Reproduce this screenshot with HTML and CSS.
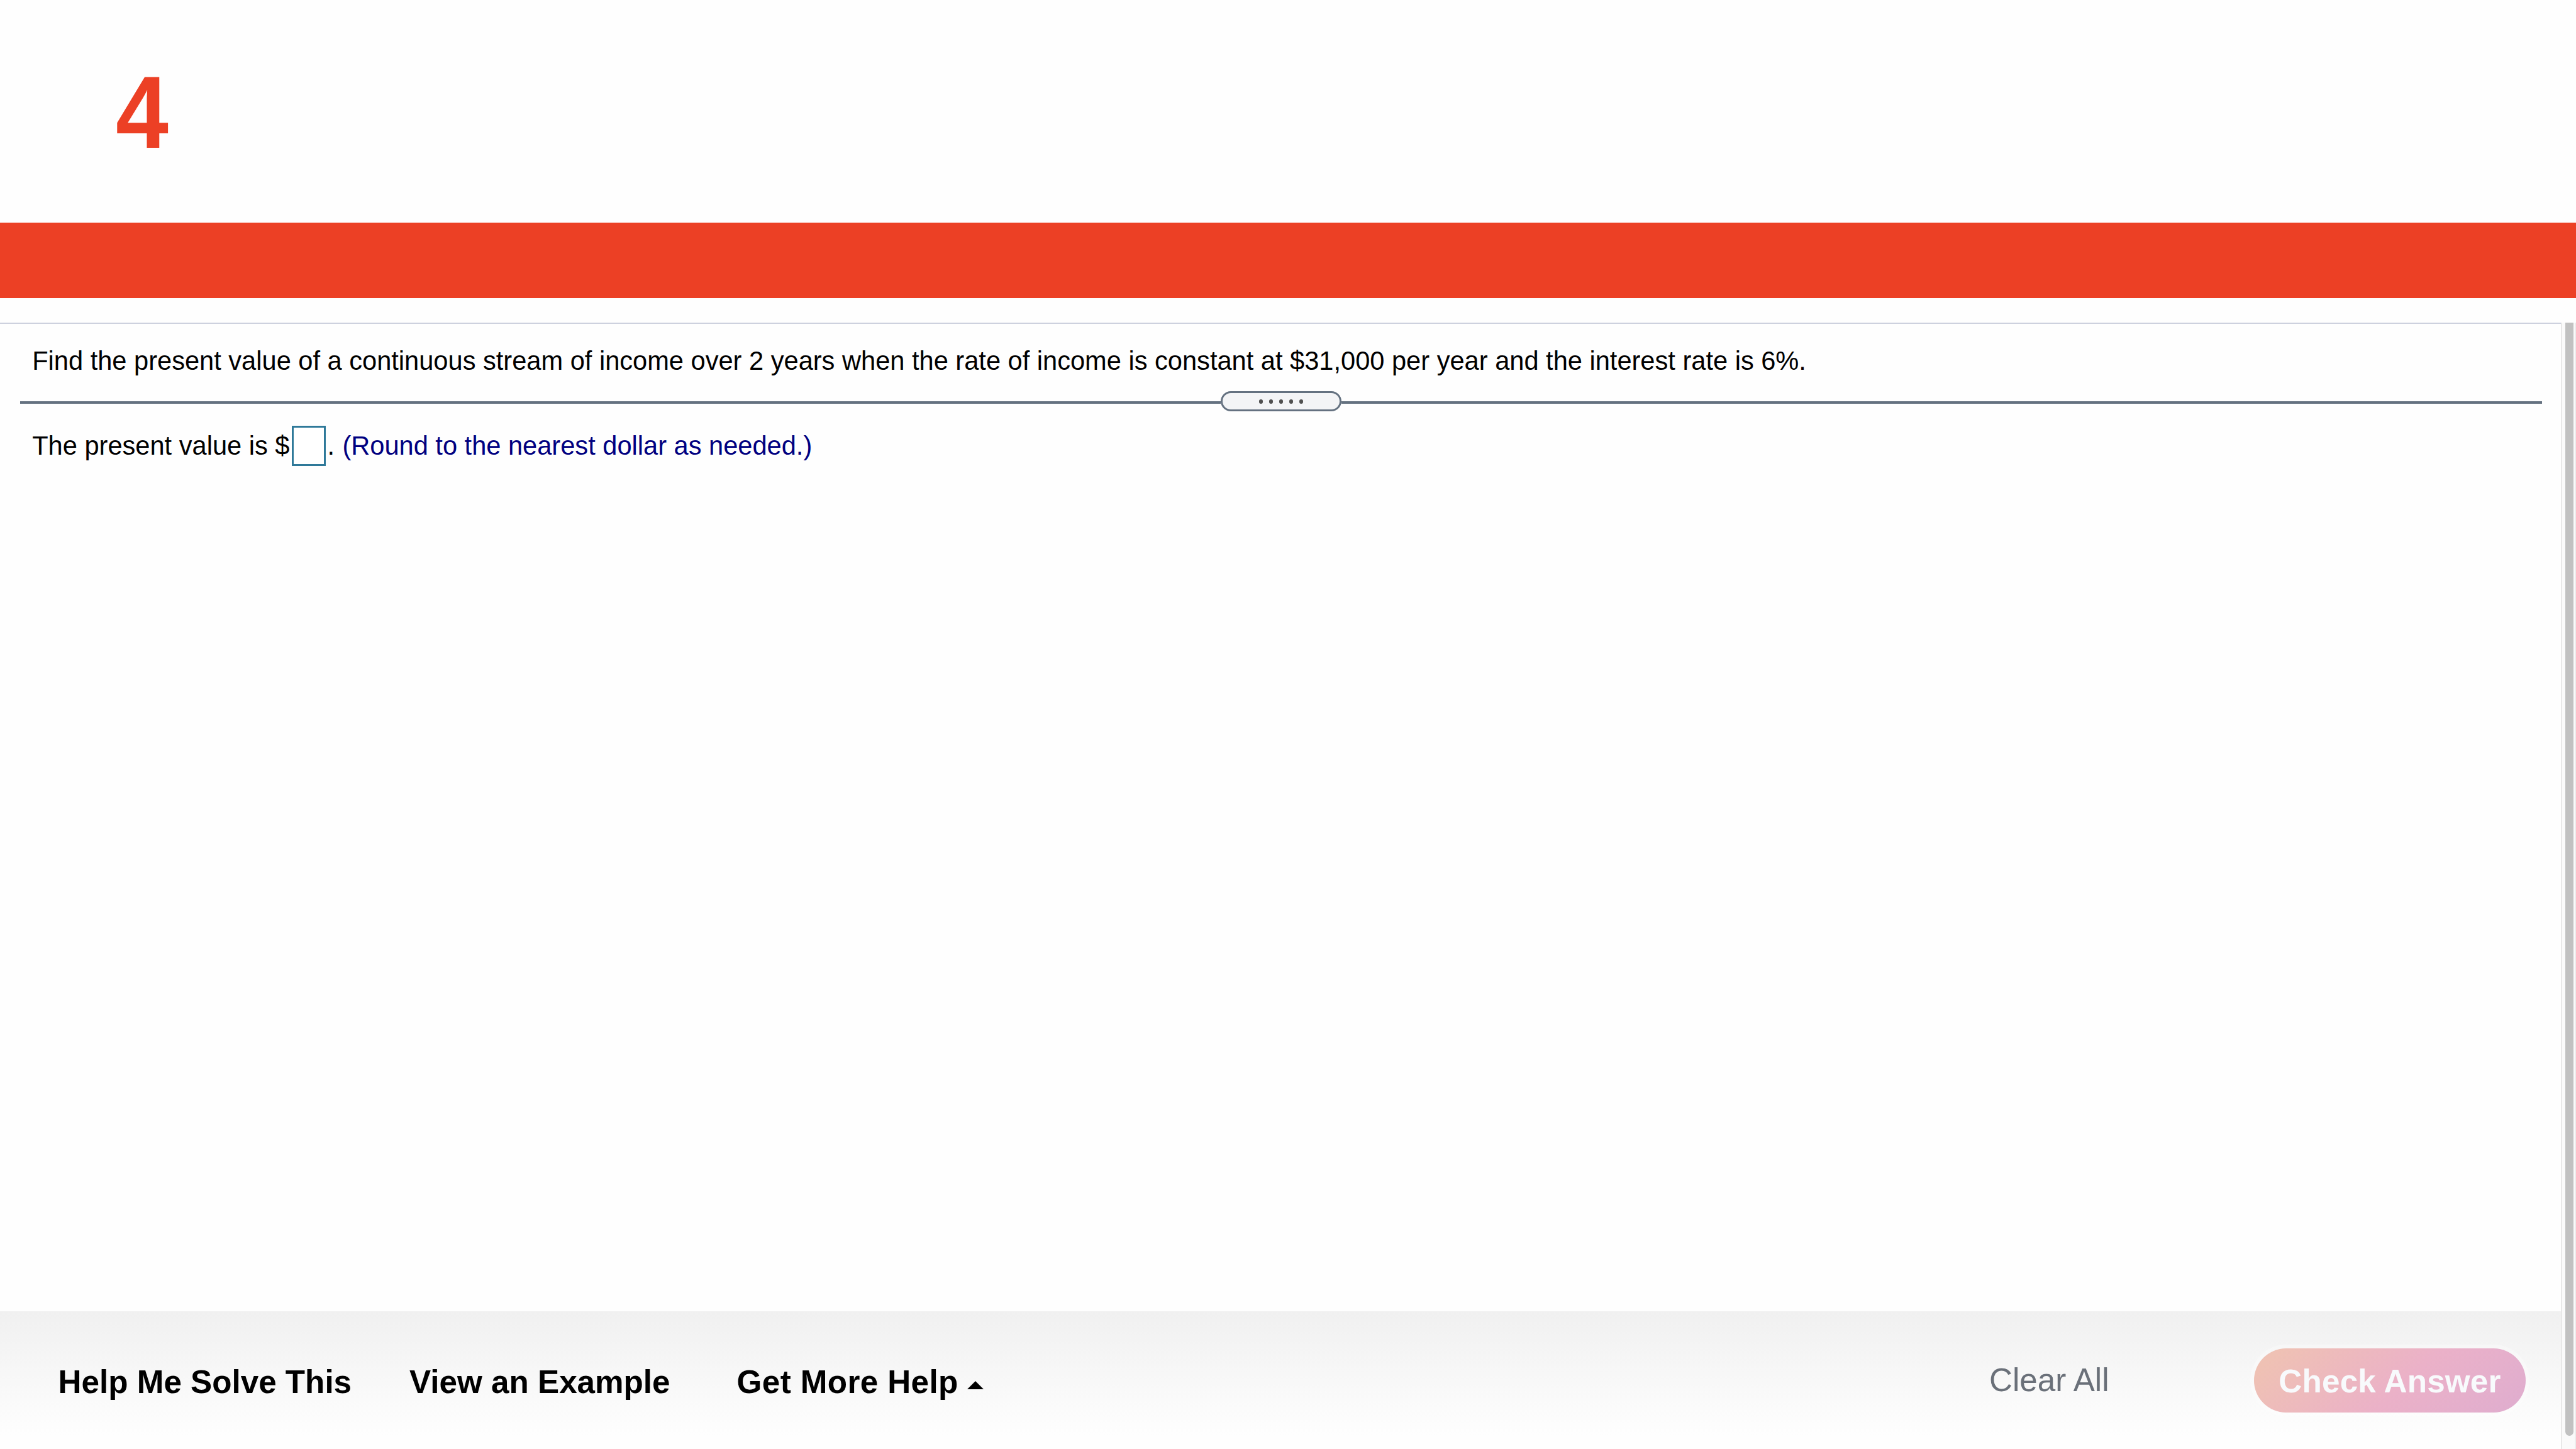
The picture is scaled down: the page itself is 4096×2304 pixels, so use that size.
FILE: index.html
```
<!DOCTYPE html>
<html lang="en">
<head>
    <meta charset="UTF-8">
    <meta name="viewport" content="width=device-width, initial-scale=1.0">
    <title>Question 4</title>
    <link rel="stylesheet" href="styles.css">
</head>
<body>
    <header class="question-header">
        <h1 class="question-number">4</h1>
    </header>
    <div class="banner"></div>

    <div class="player">
        <main class="content">
            <p class="question-text">Find the present value of a continuous stream of income over 2 years when the rate of income is constant at $31,000 per year and the interest rate is 6%.</p>

            <div class="divider">
                <div class="divider-handle">
                    <span class="dot"></span>
                    <span class="dot"></span>
                    <span class="dot"></span>
                    <span class="dot"></span>
                    <span class="dot"></span>
                </div>
            </div>

            <div class="answer-row">
                <span>The present value is $</span>
                <input class="answer-input" type="text" aria-label="Present value">
                <span class="period">.</span>
                <span class="hint">(Round to the nearest dollar as needed.)</span>
            </div>

            <footer class="toolbar">
                <a class="help-link">Help Me Solve This</a>
                <a class="help-link example-link">View an Example</a>
                <a class="help-link more-link">Get More Help<span class="caret"></span></a>
                <a class="clear-link">Clear All</a>
                <button class="check-button">Check Answer</button>
            </footer>
        </main>

        <div class="scrollbar">
            <div class="scrollbar-thumb"></div>
        </div>
    </div>
</body>
</html>
```

FILE: styles.css
```
* {
    margin: 0;
    padding: 0;
    box-sizing: border-box;
}

body {
    font-family: 'Liberation Sans', Arial, sans-serif;
    background: #fefefe;
    color: #000;
    height: 2304px;
    display: flex;
    flex-direction: column;
    overflow: hidden;
}

.question-header {
    height: 353.6px;
    padding: 88px 0 0 184px;
    flex-shrink: 0;
}

.question-number {
    color: #ec4025;
    font-size: 164px;
    font-weight: bold;
    line-height: 181px;
    transform: scaleX(0.92);
    transform-origin: 0 50%;
}

.banner {
    height: 120px;
    background: #ec4025;
    flex-shrink: 0;
}

.player {
    flex: 1;
    display: flex;
    margin-top: 39.2px;
    min-height: 0;
}

.content {
    flex: 1;
    display: flex;
    flex-direction: column;
    border-top: 2px solid #cdd1de;
    padding-top: 29.6px;
}

.question-text {
    font-size: 41.6px;
    line-height: 60px;
    padding-left: 51.2px;
    white-space: nowrap;
}

/* Draggable divider between question and answer */
.divider {
    display: flex;
    height: 32px;
    margin: 18px 30.4px 0 32px;
}

.divider::before,
.divider::after {
    content: '';
    flex: 1;
    height: 3.2px;
    margin-top: 16px;
    background: #647180;
}

.divider-handle {
    width: 192px;
    height: 32px;
    display: flex;
    align-items: center;
    padding-left: 57.8px;
    gap: 9.6px;
    border: 3px solid #647180;
    border-radius: 16px;
    background: #f3f4f6;
}

.dot {
    width: 6.4px;
    height: 6.4px;
    border-radius: 50%;
    background: #505050;
}

.answer-row {
    display: flex;
    align-items: center;
    height: 64px;
    margin-top: 22.4px;
    padding-left: 51.2px;
    font-size: 41.6px;
    line-height: 64px;
    white-space: nowrap;
}

.answer-input {
    width: 54px;
    height: 64px;
    margin: 0 2.4px 0 3.6px;
    border: 3px solid #2f7999;
    background: #fff;
}

.hint {
    color: #000080;
    margin-left: 12.4px;
}

.toolbar {
    display: flex;
    align-items: flex-start;
    height: 219.2px;
    margin-top: auto;
    padding: 59.2px 56px 0 92.6px;
    background: linear-gradient(#f0f0f0, #fefefe 90%);
    font-size: 51.2px;
    line-height: 102.4px;
    white-space: nowrap;
}

.help-link {
    font-weight: bold;
    padding-top: 3px;
}

.example-link {
    margin-left: 92px;
}

.more-link {
    display: flex;
    align-items: center;
    margin-left: 106px;
    letter-spacing: 0.4px;
}

.caret {
    margin: 8px 0 0 14px;
    border: solid transparent;
    border-width: 0 13px 13px;
    border-bottom-color: #000;
}

.clear-link {
    margin-left: auto;
    color: #6a7079;
}

.check-button {
    width: 432px;
    height: 102.4px;
    margin-left: 230.4px;
    padding-top: 3px;
    border: none;
    border-radius: 52px;
    background: linear-gradient(135deg, #efc1b4 8%, #ebb1c8 55%, #dfadcf);
    box-shadow: 0 0 0 6px rgba(255, 255, 255, 0.3);
    color: #f8fafc;
    font: bold 51.2px 'Liberation Sans', Arial, sans-serif;
    letter-spacing: 0.2px;
}

.scrollbar {
    width: 24px;
    padding: 0 3px 20.8px 5px;
    border-left: 2px solid #e8e8e8;
    border-right: 2px solid #ededed;
    background: #fafafa;
}

.scrollbar-thumb {
    width: 13px;
    height: 100%;
    border-radius: 0 0 7px 7px;
    background: #c1c1c1;
}
```
